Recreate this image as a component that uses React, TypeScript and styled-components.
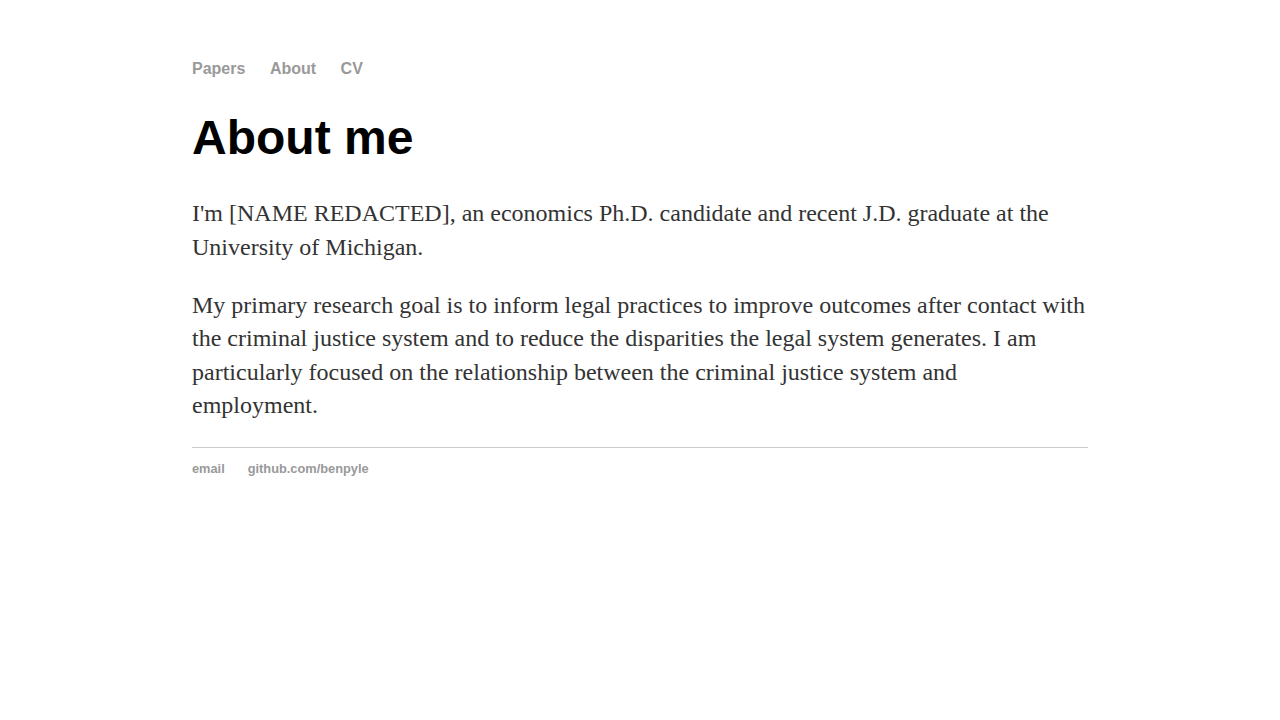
import React from "react";
import styled, { createGlobalStyle } from "styled-components";

const Global = createGlobalStyle`
  html, body { margin: 0; padding: 0; background: #fff; }
  body { font-family: "Liberation Serif", "Times New Roman", serif; }
`;

const Page = styled.div`
  width: 896px;
  margin: 0 auto;
  padding-top: 59px;
`;

const Nav = styled.nav`
  display: flex;
  gap: 24.5px;
  font-family: "Liberation Sans", Arial, sans-serif;
  font-weight: bold;
  font-size: 16px;
  line-height: 20px;
`;

const NavLink = styled.a`
  color: #999;
  text-decoration: none;
`;

const Title = styled.h1`
  font-family: "Liberation Sans", Arial, sans-serif;
  font-weight: bold;
  font-size: 48px;
  line-height: 56px;
  color: #000;
  margin: 31px 0 31.4px;
`;

const Para = styled.p<{ $last?: boolean }>`
  font-size: 24px;
  line-height: 33.33px;
  color: #333;
  margin: 0 0 ${(p) => (p.$last ? "24.2px" : "25px")};
`;

const Rule = styled.hr`
  border: none;
  border-top: 1px solid #ccc;
  margin: 0;
`;

const Footer = styled.footer`
  display: flex;
  gap: 23px;
  padding-top: 13px;
  font-family: "Liberation Sans", Arial, sans-serif;
  font-weight: bold;
  font-size: 12.8px;
  line-height: 16px;
`;

export default function App() {
  return (
    <>
      <Global />
      <Page>
        <Nav>
          <NavLink href="#">Papers</NavLink>
          <NavLink href="#">About</NavLink>
          <NavLink href="#">CV</NavLink>
        </Nav>
        <Title>About me</Title>
        <Para>
          I'm [NAME REDACTED], an economics Ph.D. candidate and recent J.D. graduate at the University of Michigan.
        </Para>
        <Para $last>
          My primary research goal is to inform legal practices to improve outcomes after contact with the criminal justice system and to reduce the disparities the legal system generates. I am particularly focused on the relationship between the criminal justice system and employment.
        </Para>
        <Rule />
        <Footer>
          <NavLink href="#">email</NavLink>
          <NavLink href="#">github.com/benpyle</NavLink>
        </Footer>
      </Page>
    </>
  );
}
